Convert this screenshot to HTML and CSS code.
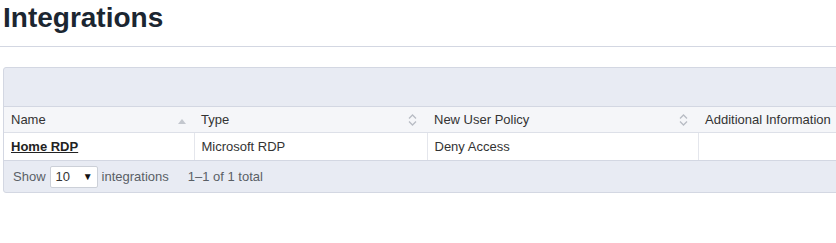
FILE: index.html
```html
<!DOCTYPE html>
<html lang="en">
<head>
  <meta charset="UTF-8">
  <title>Integrations</title>
  <link rel="stylesheet" href="styles.css">
</head>
<body>
  <div class="page-header">
    <h1>Integrations</h1>
  </div>

  <div class="panel">
    <div class="toolbar"></div>
    <table class="grid">
      <thead>
        <tr>
          <th class="col-name">Name <span class="sort sort-up"><svg width="8" height="5" viewBox="0 0 8 5"><path d="M0 5L4 0L8 5Z" fill="#c3c7ce"/></svg></span></th>
          <th class="col-type">Type <span class="sort"><svg width="9" height="12" viewBox="0 0 9 12"><path d="M1 4.5L4.5 1L8 4.5M1 7.5L4.5 11L8 7.5" fill="none" stroke="#b8bcc4" stroke-width="1.3"/></svg></span></th>
          <th class="col-policy">New User Policy <span class="sort"><svg width="9" height="12" viewBox="0 0 9 12"><path d="M1 4.5L4.5 1L8 4.5M1 7.5L4.5 11L8 7.5" fill="none" stroke="#b8bcc4" stroke-width="1.3"/></svg></span></th>
          <th class="col-info">Additional Information</th>
        </tr>
      </thead>
      <tbody>
        <tr>
          <td><a href="#">Home RDP</a></td>
          <td>Microsoft RDP</td>
          <td>Deny Access</td>
          <td></td>
        </tr>
      </tbody>
    </table>
    <div class="footer">
      <span>Show</span>
      <span class="select">10 <span class="arrow">&#9660;</span></span>
      <span>integrations</span>
      <span class="total">1&ndash;1 of 1 total</span>
    </div>
  </div>
</body>
</html>
```

FILE: styles.css
```css
body {
  font-family: "Liberation Sans", Arial, sans-serif;
  font-size: 13px;
  color: #333;
  margin: 0;
  overflow: hidden;
  background: #fff;
}

.page-header {
  border-bottom: 1px solid #d3d7e2;
  padding: 2px 3px 0;
  height: 44px;
}

.page-header h1 {
  margin: 0;
  font-size: 28px;
  line-height: 32px;
  font-weight: bold;
  color: #1b2631;
}

.panel {
  margin: 20px 0 0 3px;
  width: 900px;
  border: 1px solid #d3d7e2;
  border-radius: 3px;
  background: #e8ebf3;
}

.toolbar {
  height: 38px;
  border-bottom: 1px solid #d3d7e2;
}

.grid {
  width: 100%;
  border-collapse: collapse;
  background: #fff;
}

.grid th {
  background: #f5f6f9;
  font-weight: normal;
  text-align: left;
  height: 25px;
  padding: 0 7px;
  border-bottom: 1px solid #dde0e8;
  position: relative;
}

.grid td {
  height: 27px;
  padding: 0 7px;
  border-left: 1px solid #e4e6ec;
  border-bottom: 1px solid #d3d7e2;
}

.grid td:first-child {
  border-left: none;
}

.col-name { width: 176px; }
.col-type { width: 219px; }
.col-policy { width: 257px; }

.sort {
  position: absolute;
  right: 10px;
  top: 7px;
  line-height: 12px;
}

.sort-up {
  top: 10px;
  right: 8px;
  line-height: 5px;
}

.grid a {
  color: #222;
  font-weight: bold;
  text-decoration: underline;
}

.footer {
  height: 31px;
  display: flex;
  align-items: center;
  padding-left: 9px;
  color: #5a5f66;
  gap: 4px;
}

.select {
  display: inline-flex;
  align-items: center;
  justify-content: space-between;
  width: 37px;
  height: 20px;
  padding: 0 4px 0 5px;
  background: #fff;
  border: 1px solid #ccd0d8;
  border-radius: 2px;
  color: #333;
}

.arrow {
  font-size: 10px;
  color: #111;
}

.total {
  margin-left: 15px;
}
```
